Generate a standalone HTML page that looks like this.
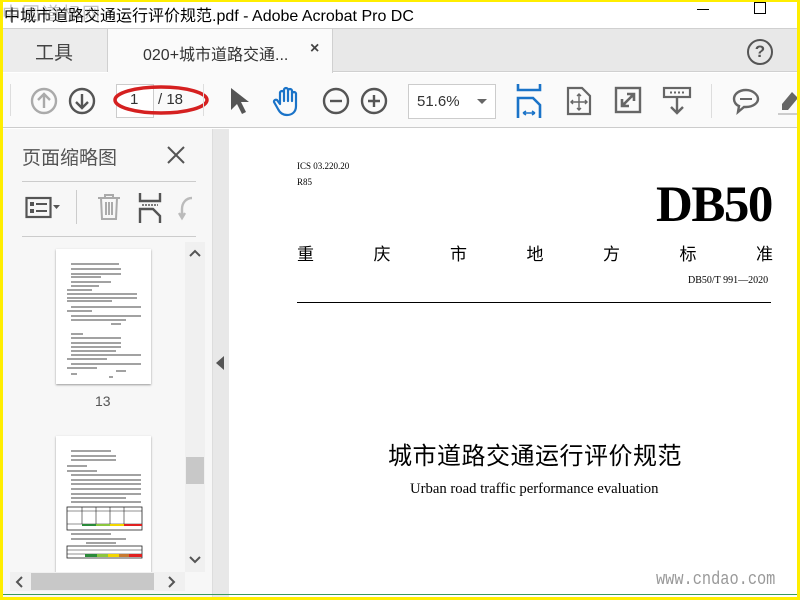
<!DOCTYPE html>
<html><head><meta charset="utf-8"><style>
*{margin:0;padding:0;box-sizing:border-box}
body{width:800px;height:600px;overflow:hidden;background:#fff;font-family:"Liberation Sans","Noto Sans CJK SC",sans-serif;position:relative}
.a{position:absolute}
.cjk{font-family:"Liberation Sans","Noto Sans CJK SC",sans-serif}
.ser{font-family:"Liberation Serif","Noto Serif CJK SC",serif}
.line{position:absolute;background:#ccc}
</style></head><body>
<div class="a" style="left:0;top:0;width:800px;height:28px;background:#fff"></div>
<div class="a cjk" style="left:4px;top:2px;font-size:16px;color:#000;white-space:nowrap">中城市道路交通运行评价规范.pdf - Adobe Acrobat Pro DC</div>
<div class="a cjk" style="left:2px;top:0px;font-size:18px;color:rgba(120,120,120,0.45);white-space:nowrap;letter-spacing:2px">中国道标网</div>
<div class="a" style="left:697px;top:9px;width:12px;height:1px;background:#000"></div>
<div class="a" style="left:754px;top:2px;width:12px;height:12px;border:1px solid #000"></div>
<div class="a" style="left:0;top:28px;width:800px;height:44px;background:#e8e8e8;border-top:1px solid #d0d0d0;border-bottom:1px solid #d0d0d0"></div>
<div class="a" style="left:0;top:29px;width:108px;height:43px;background:#ececec;border-right:1px solid #d0d0d0"></div>
<div class="a cjk" style="left:35px;top:38px;font-size:19px;color:#444">工具</div>
<div class="a" style="left:108px;top:29px;width:225px;height:44px;background:#fafafa;border-right:1px solid #d0d0d0"></div>
<div class="a cjk" style="left:143px;top:41px;font-size:16px;color:#333">020+城市道路交通...</div>
<div class="a" style="left:310px;top:40px;font-size:16px;color:#444;font-weight:bold">×</div>
<div class="a" style="left:747px;top:39px;width:26px;height:26px;border:2px solid #555;border-radius:50%;text-align:center;font-size:17px;font-weight:bold;color:#555;line-height:22px">?</div>
<div class="a" style="left:0;top:73px;width:800px;height:55px;background:#fafafa;border-bottom:1px solid #ccc"></div>
<div class="a" style="left:10px;top:84px;width:1px;height:32px;background:#ddd"></div>
<svg class="a" style="left:30px;top:87px" width="28" height="28" viewBox="0 0 28 28"><circle cx="14" cy="14" r="12" fill="none" stroke="#aaa" stroke-width="2.4"/><path d="M14 21V7M8 13l6-6 6 6" fill="none" stroke="#aaa" stroke-width="2.4"/></svg>
<svg class="a" style="left:68px;top:87px" width="28" height="28" viewBox="0 0 28 28"><circle cx="14" cy="14" r="12" fill="none" stroke="#555" stroke-width="2.4"/><path d="M14 7v14M8 15l6 6 6-6" fill="none" stroke="#555" stroke-width="2.4"/></svg>
<div class="a" style="left:116px;top:84px;width:38px;height:34px;border:1px solid #ccc;background:#fff"></div>
<div class="a" style="left:130px;top:91px;font-size:15px;color:#333">1</div>
<div class="a" style="left:158px;top:91px;font-size:15px;color:#333">/ 18</div>
<svg class="a" style="left:110px;top:80px" width="104" height="40" viewBox="0 0 104 40"><ellipse cx="51" cy="20" rx="46" ry="13" fill="none" stroke="#d52020" stroke-width="3.5"/></svg>
<div class="a" style="left:203px;top:84px;width:1px;height:32px;background:#ddd"></div>
<svg class="a" style="left:228px;top:86px" width="22" height="30" viewBox="0 0 22 30"><path d="M3 2v22l6-6 5 10 4-2-5-10h8z" fill="#555"/></svg>
<svg class="a" style="left:272px;top:85px" width="30" height="32" viewBox="0 0 30 32"><path d="M8 18V8a2 2 0 014 0v8V5a2 2 0 014 0v11V6a2 2 0 014 0v10V9a2 2 0 014 0v12c0 6-4 9-9 9-4 0-7-2-9-6l-4-7a2 2 0 013-2l3 4z" fill="none" stroke="#1a73c8" stroke-width="2.2" stroke-linejoin="round"/></svg>
<svg class="a" style="left:322px;top:87px" width="28" height="28" viewBox="0 0 28 28"><circle cx="14" cy="14" r="12" fill="none" stroke="#555" stroke-width="2.4"/><path d="M8 14h12" stroke="#555" stroke-width="2.4"/></svg>
<svg class="a" style="left:360px;top:87px" width="28" height="28" viewBox="0 0 28 28"><circle cx="14" cy="14" r="12" fill="none" stroke="#555" stroke-width="2.4"/><path d="M8 14h12M14 8v12" stroke="#555" stroke-width="2.4"/></svg>
<div class="a" style="left:408px;top:84px;width:88px;height:35px;border:1px solid #ccc;background:#fff"></div>
<div class="a" style="left:417px;top:93px;font-size:15px;color:#333">51.6%</div>
<div class="a" style="left:477px;top:99px;width:0;height:0;border-left:5px solid transparent;border-right:5px solid transparent;border-top:5px solid #666"></div>
<svg class="a" style="left:516px;top:84px" width="26" height="34" viewBox="0 0 26 34"><path d="M2 0v6h22V0M2 34V14h15l7 7v13" fill="none" stroke="#1a73c8" stroke-width="2.6"/><path d="M7 29h12M7 29l3-2M7 29l3 2M19 29l-3-2M19 29l-3 2" stroke="#1a73c8" stroke-width="1.6"/></svg>
<svg class="a" style="left:566px;top:86px" width="26" height="30" viewBox="0 0 26 30"><path d="M2 2h14l8 8v18H2z" fill="none" stroke="#666" stroke-width="2.2"/><path d="M13 8v16M5 16h16M11 10l2-2 2 2M11 22l2 2 2-2M7 14l-2 2 2 2M19 14l2 2-2 2" fill="none" stroke="#666" stroke-width="1.4"/></svg>
<svg class="a" style="left:614px;top:86px" width="28" height="28" viewBox="0 0 28 28"><rect x="2" y="2" width="24" height="24" fill="none" stroke="#666" stroke-width="2.4"/><path d="M8 20l12-12M13 8h7v7M15 20H8v-7" fill="none" stroke="#666" stroke-width="2.6"/><path d="M15 8h5v5zM13 20H8v-5z" fill="#666"/></svg>
<svg class="a" style="left:662px;top:86px" width="30" height="30" viewBox="0 0 30 30"><rect x="2" y="2" width="26" height="9" fill="none" stroke="#666" stroke-width="2.2"/><path d="M8 6.5h2M12 6.5h2M16 6.5h2M20 6.5h2" stroke="#666" stroke-width="2"/><path d="M15 12v15M9 21l6 6 6-6" fill="none" stroke="#666" stroke-width="2.4"/></svg>
<div class="a" style="left:711px;top:84px;width:1px;height:34px;background:#ddd"></div>
<svg class="a" style="left:731px;top:87px" width="30" height="30" viewBox="0 0 30 30"><path d="M15 3C8 3 3 7 3 12c0 3 2 6 5 7l-1 6 6-5h2c7 0 12-4 12-8S22 3 15 3z" fill="none" stroke="#666" stroke-width="2.4"/><path d="M9 12h12" stroke="#666" stroke-width="2"/></svg>
<svg class="a" style="left:778px;top:90px" width="20" height="26" viewBox="0 0 20 26"><path d="M14 2l6 6-10 12H4v-6z" fill="#666"/><path d="M0 24h20" stroke="#ccc" stroke-width="2"/></svg>
<div class="a" style="left:0;top:129px;width:212px;height:471px;background:#f7f7f7"></div>
<div class="a cjk" style="left:22px;top:143px;font-size:19px;color:#555">页面缩略图</div>
<svg class="a" style="left:166px;top:145px" width="20" height="20" viewBox="0 0 20 20"><path d="M2 2l16 16M18 2L2 18" stroke="#555" stroke-width="2"/></svg>
<div class="line" style="left:22px;top:181px;width:174px;height:1px"></div>
<svg class="a" style="left:25px;top:196px" width="38" height="24" viewBox="0 0 38 24"><rect x="1.5" y="2" width="24" height="19" fill="none" stroke="#555" stroke-width="2.2"/><rect x="5" y="6" width="4" height="4" fill="#555"/><rect x="5" y="13" width="4" height="4" fill="#555"/><path d="M11 8h11M11 15h11" stroke="#555" stroke-width="2"/><path d="M28 9h7l-3.5 4z" fill="#555"/></svg>
<div class="a" style="left:76px;top:190px;width:1px;height:34px;background:#ccc"></div>
<svg class="a" style="left:96px;top:193px" width="26" height="28" viewBox="0 0 26 28"><path d="M2 5h22M9 5V2h8v3M5 5l1 21h14l1-21M10 9v13M13 9v13M16 9v13" fill="none" stroke="#aaa" stroke-width="2"/></svg>
<svg class="a" style="left:138px;top:193px" width="24" height="30" viewBox="0 0 24 30"><path d="M2 0v8h20V0M2 30V16h13l7 7v7" fill="none" stroke="#555" stroke-width="2.4"/><path d="M4 12h16" stroke="#555" stroke-width="1.5" stroke-dasharray="2 1"/></svg>
<svg class="a" style="left:178px;top:194px" width="18" height="28" viewBox="0 0 18 28"><path d="M14 4C8 4 4 9 4 15l0 8M1 19l3 5 3-5" fill="none" stroke="#bbb" stroke-width="2.4"/></svg>
<div class="line" style="left:22px;top:236px;width:174px;height:1px"></div>
<div class="a" style="left:56px;top:249px;width:95px;height:135px;background:#fff;box-shadow:0 1px 2px #999;overflow:hidden">
<svg width="95" height="135" viewBox="0 0 95 135"><g stroke="#444" stroke-width="1.1">
<path d="M15 15h48M15 20h50M15 25h50M15 28h30M15 33h40M15 37h28M11 41h25M11 45h70M11 49h70M11 52h45M15 58h70M11 62h25M15 67h70M15 71h55M55 75h10M15 85h12M15 89h50M15 94h50M15 98h50M15 102h45M15 106h70M11 110h40M15 115h70M11 119h30M60 122h10M15 125h6M53 128h4"/></g></svg></div>
<div class="a" style="left:95px;top:393px;font-size:14px;color:#555">13</div>
<div class="a" style="left:56px;top:436px;width:95px;height:136px;background:#fff;box-shadow:0 1px 2px #999;overflow:hidden">
<svg width="95" height="136" viewBox="0 0 95 136"><g stroke="#444" stroke-width="1.1"><path d="M15 15h40M15 20h45M15 24h45M11 30h20M11 35h30M15 39h70M15 44h70M15 48h70M15 53h70M15 58h70M15 62h55M15 66h70"/></g>
<rect x="11" y="71" width="75" height="23" fill="none" stroke="#222" stroke-width="0.8"/><path d="M11 75h75M11 88h75M26 71v17M40 71v17M54 71v17M68 71v17" stroke="#222" stroke-width="0.6"/>
<rect x="26" y="88" width="14" height="2" fill="#2a8a3a"/><rect x="40" y="88" width="14" height="2" fill="#8cc63f"/><rect x="54" y="88" width="14" height="2" fill="#f2d600"/><rect x="68" y="88" width="18" height="2" fill="#e02020"/>
<path d="M15 98h40M15 103h55M30 107h30" stroke="#444" stroke-width="1"/>
<rect x="11" y="110" width="75" height="12" fill="none" stroke="#222" stroke-width="0.8"/><path d="M11 114h75M11 118h75" stroke="#222" stroke-width="0.6"/>
<rect x="29" y="118" width="12" height="3" fill="#2a8a3a"/><rect x="41" y="118" width="11" height="3" fill="#8cc63f"/><rect x="52" y="118" width="11" height="3" fill="#f2d600"/><rect x="63" y="118" width="10" height="3" fill="#c87a30"/><rect x="73" y="118" width="13" height="3" fill="#e02020"/></svg></div>
<div class="a" style="left:185px;top:242px;width:20px;height:330px;background:#f0f0f0"></div>
<div class="a" style="left:186px;top:457px;width:18px;height:27px;background:#c8c8c8"></div>
<svg class="a" style="left:188px;top:248px" width="14" height="10" viewBox="0 0 14 10"><path d="M2 8l5-5 5 5" fill="none" stroke="#555" stroke-width="2"/></svg>
<svg class="a" style="left:188px;top:555px" width="14" height="10" viewBox="0 0 14 10"><path d="M2 2l5 5 5-5" fill="none" stroke="#555" stroke-width="2"/></svg>
<div class="a" style="left:10px;top:572px;width:175px;height:19px;background:#f0f0f0"></div>
<div class="a" style="left:31px;top:573px;width:123px;height:17px;background:#c8c8c8"></div>
<svg class="a" style="left:14px;top:575px" width="10" height="14" viewBox="0 0 10 14"><path d="M8 2L3 7l5 5" fill="none" stroke="#555" stroke-width="2"/></svg>
<svg class="a" style="left:167px;top:575px" width="10" height="14" viewBox="0 0 10 14"><path d="M2 2l5 5-5 5" fill="none" stroke="#555" stroke-width="2"/></svg>
<div class="a" style="left:212px;top:129px;width:17px;height:471px;background:#e8e8e8;border-left:1px solid #ddd"></div>
<div class="a" style="left:216px;top:356px;width:0;height:0;border-top:7px solid transparent;border-bottom:7px solid transparent;border-right:8px solid #555"></div>
<div class="a ser" style="left:297px;top:161px;font-size:9px;color:#000">ICS 03.220.20</div>
<div class="a ser" style="left:297px;top:177px;font-size:9px;color:#000">R85</div>
<div class="a ser" style="left:656px;top:176px;font-size:51px;font-weight:bold;color:#000;letter-spacing:-1.5px">DB50</div>
<div class="a cjk" style="left:297px;top:240px;width:476px;display:flex;justify-content:space-between;font-size:17px;color:#000"><span>重</span><span>庆</span><span>市</span><span>地</span><span>方</span><span>标</span><span>准</span></div>
<div class="a ser" style="left:688px;top:275px;font-size:10px;color:#000;white-space:nowrap">DB50/T 991—2020</div>
<div class="a" style="left:297px;top:302px;width:474px;height:1px;background:#000"></div>
<div class="a cjk" style="left:388px;top:436px;font-size:24px;color:#000;letter-spacing:0.5px;white-space:nowrap">城市道路交通运行评价规范</div>
<div class="a ser" style="left:410px;top:481px;font-size:14.7px;color:#000;white-space:nowrap">Urban road traffic performance evaluation</div>
<div class="a" style="left:656px;top:570px;font-family:'Liberation Mono',monospace;font-size:18px;color:#999;white-space:nowrap;transform:scaleX(0.85);transform-origin:left">www.cndao.com</div>
<div class="a" style="left:0;top:0;width:800px;height:600px;border:3px solid #ffee00;border-top-width:2px"></div>
<div class="a" style="left:3px;top:594px;width:794px;height:1px;background:#3a9a5a"></div>
</body></html>
